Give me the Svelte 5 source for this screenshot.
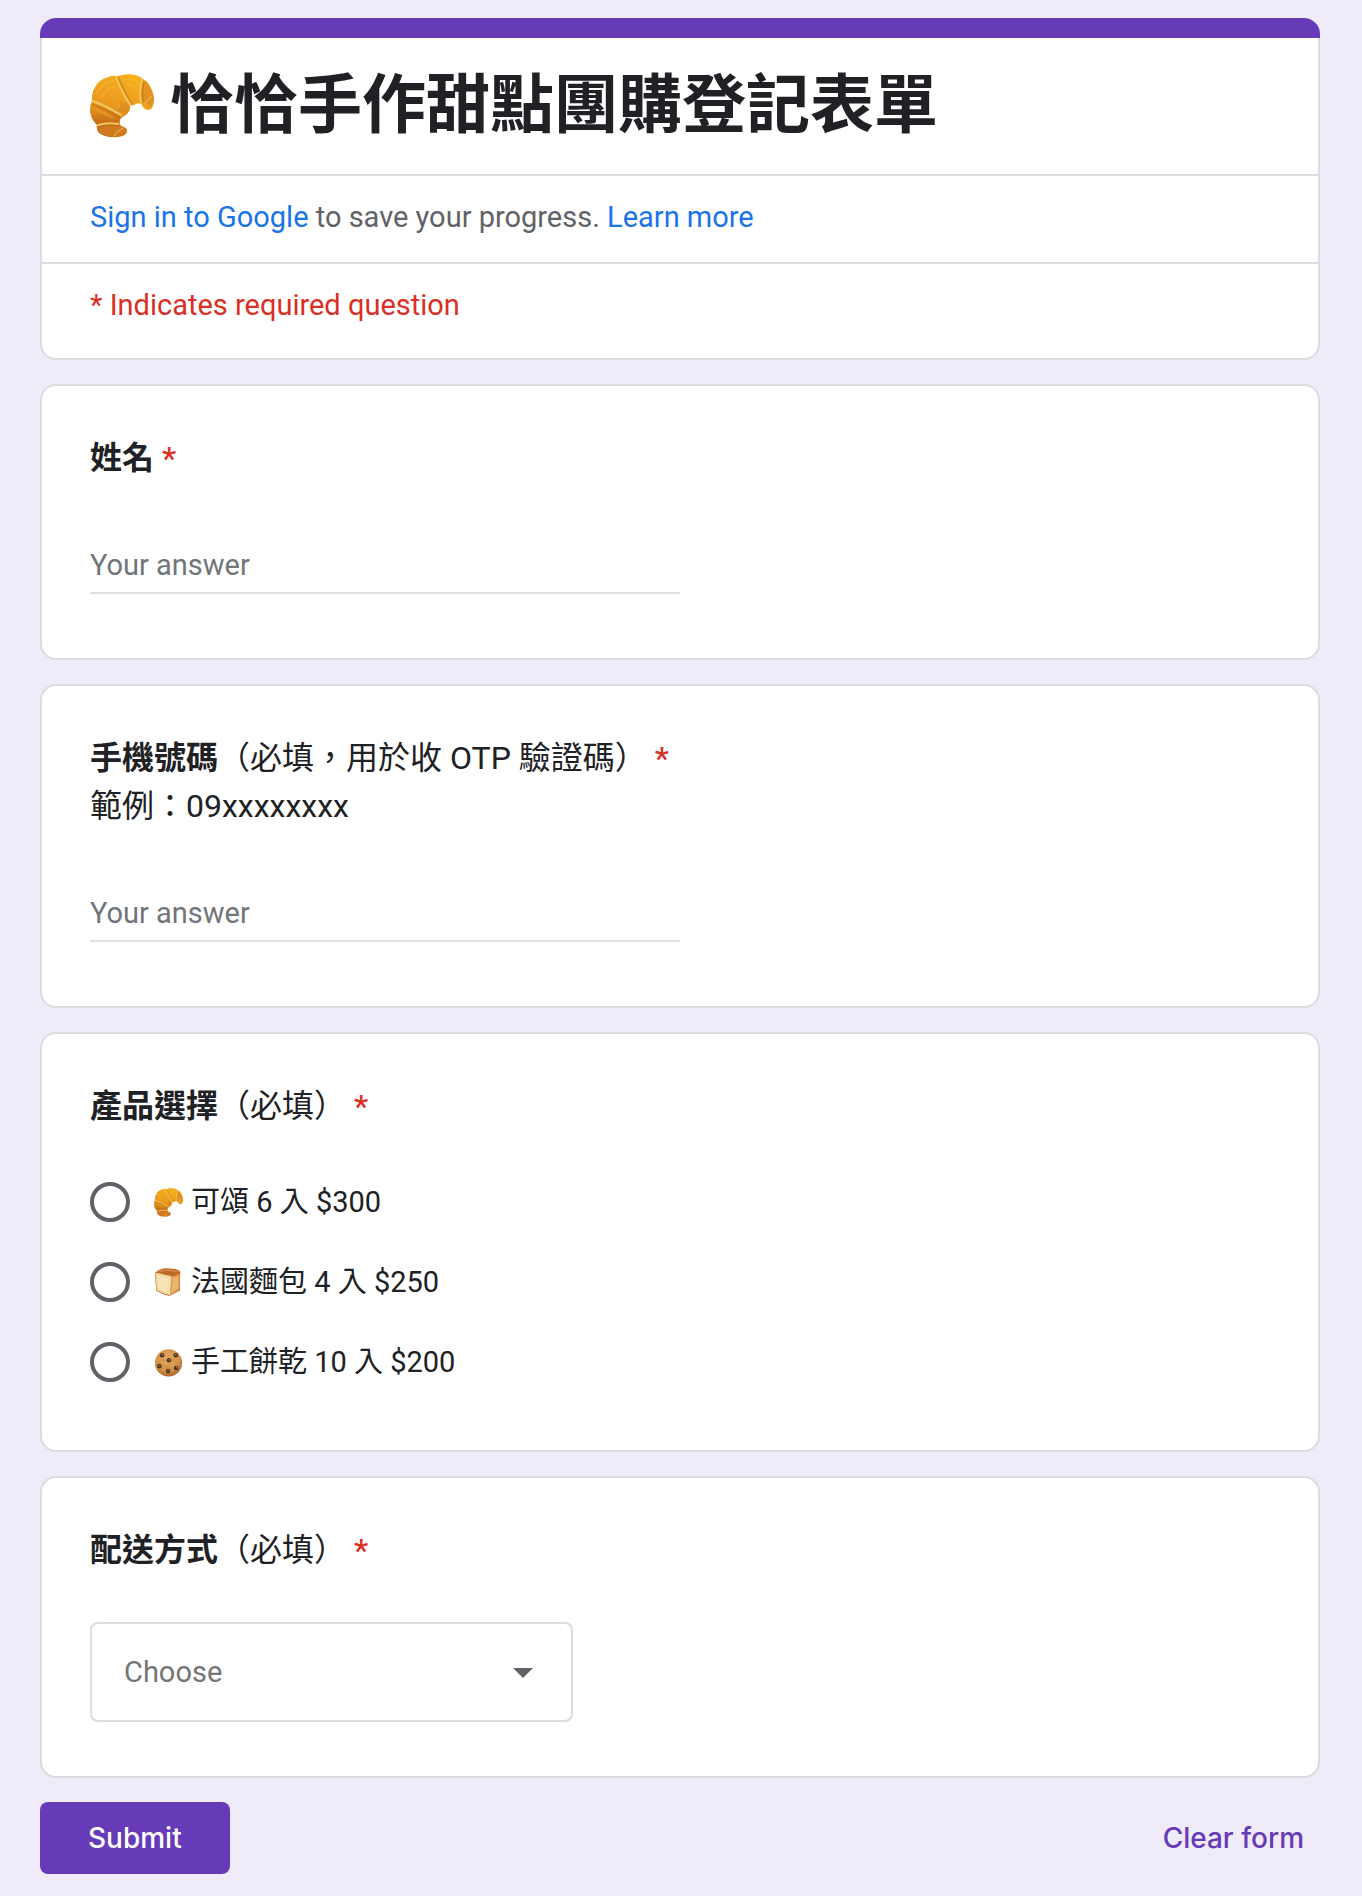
<script lang="ts">
  let name = $state("");
  let phone = $state("");
  let product = $state("");
  let delivery = $state("");

  const products = [
    { id: "croissant", label: "可頌 6 入 $300" },
    { id: "bread", label: "法國麵包 4 入 $250" },
    { id: "cookie", label: "手工餅乾 10 入 $200" },
  ];

  function clearForm() {
    name = "";
    phone = "";
    product = "";
    delivery = "";
  }
</script>

{#snippet star()}
  <span class="star" aria-hidden="true">*</span>
{/snippet}

{#snippet emoji(kind: string)}
  <svg class="emoji" viewBox="0 0 64 64" aria-hidden="true">
    {#if kind === "croissant"}
      <defs>
        <linearGradient id="crust" x1="0.65" y1="0" x2="0.3" y2="1">
          <stop offset="0" stop-color="#f7b01c" />
          <stop offset="0.5" stop-color="#eb9b20" />
          <stop offset="1" stop-color="#cb7018" />
        </linearGradient>
        <linearGradient id="fold" x1="0" y1="0" x2="0" y2="1">
          <stop offset="0" stop-color="#f0a524" />
          <stop offset="1" stop-color="#b95f14" />
        </linearGradient>
      </defs>
      <path
        d="M2 27Q1 18 7 10Q11 5 18 3Q23 1 28 2Q37-1 45 1Q50 2 53 5Q58 7 61 14Q66 24 63 31Q62 36 58 36Q53 35 52 31Q50 28 46 30Q43 32 40 31Q41 37 36 41Q33 43 31 44Q28 48 31 52Q37 53 37 57Q37 62 28 63Q15 64 9 59Q6 56 7 51Q0 44 0 36Q0 31 2 27Z"
        fill="url(#crust)"
      />
      <path d="M2 28Q16 33 31 42Q30 46 29 50L7 51Q-1 43 1 32Z" fill="url(#fold)" opacity="0.7" />
      <path d="M7 51Q18 48 29 50Q32 53 36 54Q38 59 34 61Q22 65 11 60Z" fill="#d07b22" opacity="0.7" />
      <path d="M53 6Q59 9 62 17Q65 26 62 33L57 29L51 29Q50 18 53 6Z" fill="#d5851f" opacity="0.6" />
      <path d="M27 37L37 39Q40 36 39 32Q34 28 30 27Q32 33 27 37Z" fill="#c9771b" opacity="0.35" />
      <g fill="none" stroke="#f9bf3d" stroke-width="2" opacity="0.35">
        <path d="M6 20Q12 9 23 7M11 23Q17 13 25 13M34 6Q41 4 48 8M37 11Q42 10 46 16M6 36Q15 39 23 44" />
      </g>
      <g fill="none" stroke="#a85c14" opacity="0.35">
        <path d="M28 3Q34 17 42 31M1 30Q16 35 30 44M54 8Q51 18 53 28M8 53Q18 50 29 52" stroke-width="2" />
      </g>
      <g fill="none" stroke="#f0c75e" stroke-linecap="round">
        <path d="M26 3Q31 17 40 30M3 27Q16 32 31 41" stroke-width="2" />
        <path d="M52 6Q49 18 51 28M8 51Q18 48 28 50" stroke-width="2" />
        <path d="M55 29Q58 25 62 22M24 62Q27 57 33 54" stroke-width="1" />
      </g>
    {:else if kind === "bread"}
      <path d="M2 14Q3 8 12 4Q22 0 34 1Q52 1 58 8L57 50L33 62Q17 57 5 50Z" fill="#bd6a27" />
      <path d="M36 19Q48 17 57 12L56 49Q45 57 33 61Z" fill="#dc9b50" />
      <path d="M41 22Q48 20 54 18L53 44Q46 51 38 55Z" fill="#e9b66d" />
      <path d="M3 14Q6 9 14 12Q27 16 36 17Q42 20 36 28L34 60Q18 56 6 49Z" fill="#f4d49c" />
      <path d="M7 16Q20 17 33 22Q31 39 31 55Q18 51 9 46Z" fill="#f8e3b8" />
      <path d="M10 8Q29 2 52 8" fill="none" stroke="#d98748" stroke-width="3" />
      <path d="M36 27L34 59" stroke="#fff0c4" stroke-width="2" />
    {:else}
      <defs>
        <radialGradient id="dough" cx="0.45" cy="0.35" r="0.65">
          <stop offset="0" stop-color="#e3a75d" />
          <stop offset="0.7" stop-color="#d29146" />
          <stop offset="1" stop-color="#a86528" />
        </radialGradient>
      </defs>
      <circle cx="32" cy="33" r="30" fill="url(#dough)" />
      <path d="M9 32L18 24L25 29L40 25L50 33M18 47L28 40L38 47L52 45" fill="none" stroke="#b97937" stroke-width="1" />
      <g fill="#4d2f22">
        <ellipse cx="18" cy="16" rx="5" ry="5" />
        <ellipse cx="48" cy="16" rx="5" ry="5" />
        <ellipse cx="33" cy="27" rx="5" ry="5" />
        <ellipse cx="12" cy="40" rx="5" ry="5" />
        <ellipse cx="49" cy="44" rx="5" ry="5" />
        <ellipse cx="31" cy="51" rx="5" ry="5" />
      </g>
      <g fill="#a27b66">
        <circle cx="19" cy="15" r="2" />
        <circle cx="48" cy="15" r="2" />
        <circle cx="34" cy="26" r="2" />
        <circle cx="13" cy="39" r="2" />
        <circle cx="50" cy="43" r="2" />
        <circle cx="31" cy="50" r="2" />
      </g>
    {/if}
  </svg>
{/snippet}

<form class="page" onsubmit={(e) => e.preventDefault()}>
  <header>
    <div class="accent"></div>
    <div class="card intro">
      <h1>{@render emoji("croissant")}<span>恰恰手作甜點團購登記表單</span></h1>
      <p class="notice">
        <a href="#signin">Sign in to Google</a> to save your progress. <a href="#learn">Learn more</a>
      </p>
      <p class="notice required">* Indicates required question</p>
    </div>
  </header>

  <section class="card">
    <label class="question" for="name"><b>姓名</b>{@render star()}</label>
    <input class="answer" id="name" type="text" placeholder="Your answer" bind:value={name} />
  </section>

  <section class="card">
    <label class="question" for="phone">
      <b>手機號碼</b>（必填，用於收 OTP 驗證碼）{@render star()}<br />範例：09xxxxxxxx
    </label>
    <input class="answer" id="phone" type="text" placeholder="Your answer" bind:value={phone} />
  </section>

  <section class="card">
    <fieldset>
      <legend class="question"><b>產品選擇</b>（必填）{@render star()}</legend>
      <div class="options">
        {#each products as item (item.id)}
          <label class="option">
            <input type="radio" name="product" value={item.id} bind:group={product} />
            <span>{@render emoji(item.id)}{item.label}</span>
          </label>
        {/each}
      </div>
    </fieldset>
  </section>

  <section class="card delivery">
    <label class="question" for="delivery"><b>配送方式</b>（必填）{@render star()}</label>
    <div class="dropdown">
      <select id="delivery" bind:value={delivery}>
        <option value="">Choose</option>
      </select>
      <svg class="arrow" viewBox="0 0 20 10" aria-hidden="true"><path d="M0 0H20L10 10Z" /></svg>
    </div>
  </section>

  <footer>
    <button class="submit" type="submit">Submit</button>
    <button class="clear" type="button" onclick={clearForm}>Clear form</button>
  </footer>
</form>

<style>
  :global(body) {
    margin: 0;
    background: #f0ebf8;
  }

  .page {
    display: flex;
    flex-direction: column;
    gap: 24px;
    padding: 18px 42px 22px 40px;
    color: #202124;
    font-family: Roboto, "Noto Sans CJK TC", sans-serif;
    font-size: 29px;
  }

  .card {
    padding: 48px 48px 64px;
    background: #fff;
    border: 2px solid #dadce0;
    border-radius: 16px;
  }

  .accent {
    height: 20px;
    border-radius: 16px 16px 0 0;
    background: #673ab7;
  }

  .intro {
    padding: 0;
    border-top: 0;
    border-radius: 0 0 16px 16px;
  }

  h1 {
    display: flex;
    align-items: center;
    gap: 16px;
    margin: 0;
    padding: 28px 48px;
    font-size: 64px;
    font-weight: 700;
    line-height: 80px;
  }

  .emoji {
    flex: none;
    width: 1em;
    height: 1em;
  }

  .notice {
    margin: 0;
    padding: 21px 48px 25px;
    border-top: 2px solid #dadce0;
    color: #5f6368;
    line-height: 40px;
  }

  .notice a {
    color: #1a73e8;
    text-decoration: none;
  }

  .notice.required {
    padding-bottom: 33px;
    color: #d93025;
  }

  .question {
    display: block;
    padding: 0;
    font-size: 32px;
    line-height: 48px;
  }

  .star {
    margin-left: 8px;
    color: #d93025;
    font-weight: 500;
  }

  .answer {
    display: block;
    box-sizing: border-box;
    width: 50%;
    height: 48px;
    margin-top: 64px;
    padding: 0 0 8px;
    border: 0;
    border-bottom: 2px solid #e0e0e0;
    border-radius: 0;
    outline: 0;
    background: transparent;
    color: inherit;
    font: inherit;
  }

  .answer::placeholder {
    color: #70757a;
    opacity: 1;
  }

  fieldset {
    min-width: 0;
    margin: 0;
    padding: 0;
    border: 0;
  }

  .options {
    display: flex;
    flex-direction: column;
    gap: 40px;
    padding: 52px 0 4px;
  }

  .option {
    display: flex;
    align-items: center;
    gap: 24px;
    line-height: 40px;
  }

  .option span {
    display: flex;
    align-items: center;
    gap: 8px;
  }

  .option input {
    appearance: none;
    box-sizing: border-box;
    width: 40px;
    height: 40px;
    margin: 0;
    border: 4px solid #5f6368;
    border-radius: 50%;
  }

  .option input:checked {
    border-color: #673ab7;
    background: radial-gradient(#673ab7 10px, transparent 11px);
  }

  .delivery {
    padding-bottom: 54px;
  }

  .dropdown {
    position: relative;
    max-width: 483px;
    margin-top: 48px;
  }

  select {
    appearance: none;
    display: block;
    box-sizing: border-box;
    width: 100%;
    height: 100px;
    padding: 0 80px 0 32px;
    border: 2px solid #dadce0;
    border-radius: 8px;
    background: #fff;
    color: #757575;
    font: inherit;
  }

  .arrow {
    position: absolute;
    top: 46px;
    right: 40px;
    width: 20px;
    height: 10px;
    fill: #5f6368;
    pointer-events: none;
  }

  footer {
    display: flex;
    align-items: center;
    justify-content: space-between;
  }

  button {
    height: 72px;
    border: 0;
    border-radius: 8px;
    background: transparent;
    font-family: Inter, Roboto, sans-serif;
    font-size: 28px;
    font-weight: 500;
    cursor: pointer;
  }

  .submit {
    padding: 0 48px;
    background: #673ab7;
    color: #fff;
  }

  .clear {
    padding: 0 16px;
    color: #673ab7;
  }
</style>
